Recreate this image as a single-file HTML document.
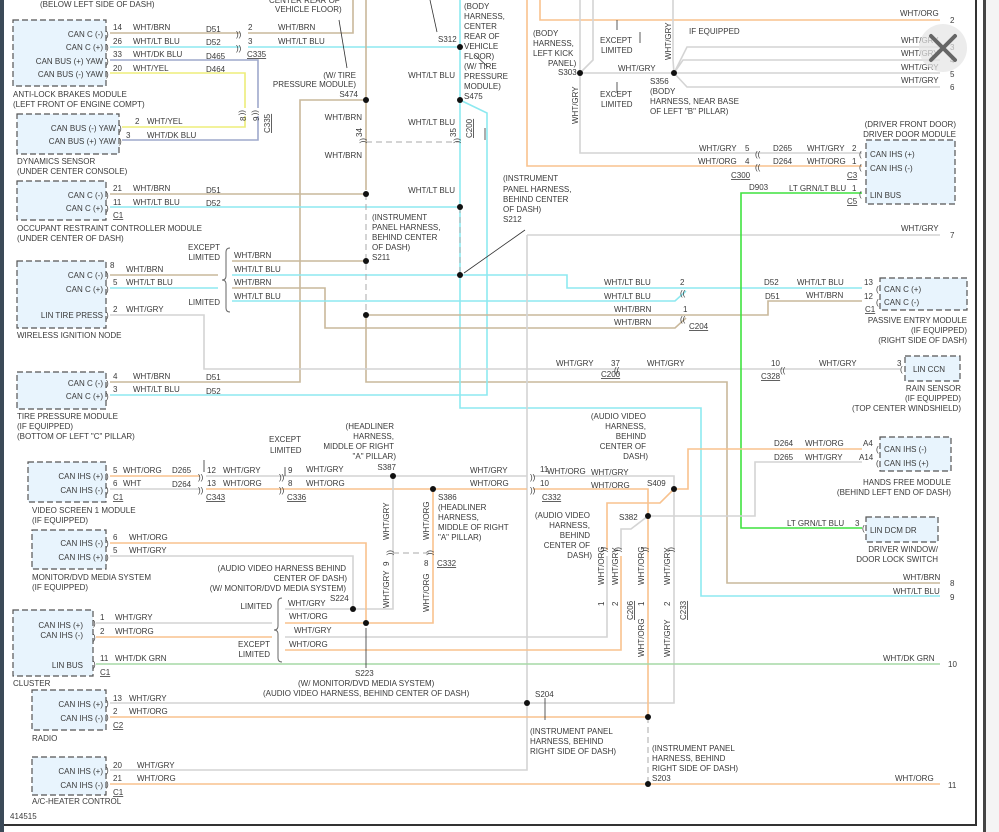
<!DOCTYPE html>
<html><head><meta charset="utf-8"><style>
html,body{margin:0;padding:0;background:#fff;width:999px;height:832px;overflow:hidden}
svg{position:absolute;left:0;top:0}
text{font-family:"Liberation Sans",sans-serif;font-size:8px;fill:#3a3a3a}
.e{text-anchor:end}
.c{font-size:10px;fill:#444}
.w{fill:none;stroke-width:1.6}
.tan{stroke:#c9b89b}.cy{stroke:#8de9f0}.gr{stroke:#d4d4d4}.or{stroke:#f8c28e}.ye{stroke:#eded7a}.db{stroke:#9ea8cc}.gn{stroke:#3fe23f}.dg{stroke:#a6d8a6}
.bx{fill:#e8f4fd;stroke:#555;stroke-width:1.2;stroke-dasharray:6,3}
.ds{fill:none;stroke:#aaa;stroke-width:1;stroke-dasharray:6,4}
.u{text-decoration:underline}
</style></head><body>
<svg width="999" height="832" viewBox="0 0 999 832">
<rect x="0" y="0" width="4" height="832" fill="#3b4a58"/>
<rect x="4" y="824" width="973" height="2" fill="#333"/>
<rect x="975" y="0" width="2" height="826" fill="#333"/>
<rect x="983" y="0" width="3" height="832" fill="#444"/>
<rect x="986" y="0" width="13" height="832" fill="#f4f4f4"/>

<g class="w">
<path class="tan" d="M110 33H240M248 33H353V0"/>
<path class="cy" d="M110 47H240M248 47H460"/>
<path class="db" d="M110 60H258V108M258 116V140H122"/>
<path class="ye" d="M110 73H245V108M245 116V127H122"/>
<path class="tan" d="M366 0V190M366 318V382H727V583H940"/>
<path class="tan" d="M366 100H300V382H110"/>
<path class="cy" d="M460 0V408H701V596H940"/>
<path class="cy" d="M460 100L487 113V395H110"/>
<path class="tan" d="M110 194H366"/>
<path class="cy" d="M110 207H460"/>
<path class="tan" d="M110 275H218"/>
<path class="cy" d="M110 288H218"/>
<path class="gr" d="M110 315H204V369H900"/>
<path class="tan" d="M232 261H366"/>
<path class="cy" d="M232 275H567V288H862"/>
<path class="tan" d="M232 288H325V328H675L686 318"/>
<path class="cy" d="M232 301H675L686 291"/>
<path class="tan" d="M366 315H768V301H862"/>
<path class="gr" d="M527 235H940M527 235V770H110"/>
<path class="or" d="M540 0V20H940"/>
<path class="or" d="M527 0V166H862"/>
<path class="gr" d="M580 0V153H862"/>
<path class="gr" d="M593 0V60L580 73H674M673 0V60L674 73"/>
<path class="gr" d="M674 73L687 47H940M674 73L683 60H940M674 73H940M674 73L687 87H940"/>
<path class="gn" d="M862 193H741V528H862"/>
<path class="or" d="M674 489H688V449H862"/>
<path class="gr" d="M648 516H755V462H862"/>
<path class="or" d="M110 476H200"/>
<path class="gr" d="M110 489H200"/>
<path class="gr" d="M206 476H527M533 476H674V703H110"/>
<path class="or" d="M206 489H527M533 489H648V717H110M648 784H110M648 784H940"/>
<path class="gr" d="M393 476V609H285"/>
<path class="or" d="M433 489V623H285"/>
<path class="gr" d="M353 609V556H110"/>
<path class="or" d="M366 623V543H110"/>
<path class="or" d="M674 489L660 503H607V550"/>
<path class="gr" d="M607 556V637H285"/>
<path class="gr" d="M648 516L631 529H621V550"/>
<path class="or" d="M621 556V650H285"/>
<path class="gr" d="M96 623H272"/>
<path class="or" d="M96 637H272"/>
<path class="dg" d="M96 664H940"/>
</g>
<g class="ds">
<path d="M366 142H460M366 194V318M460 207V275M393 553H433M648 717V784"/>
</g>
<g fill="#111">
<circle cx="460" cy="47" r="3"/><circle cx="366" cy="100" r="3"/><circle cx="460" cy="100" r="3"/>
<circle cx="366" cy="194" r="3"/><circle cx="460" cy="207" r="3"/><circle cx="366" cy="261" r="3"/>
<circle cx="460" cy="275" r="3"/><circle cx="366" cy="315" r="3"/><circle cx="580" cy="73" r="3"/>
<circle cx="674" cy="73" r="3"/><circle cx="393" cy="476" r="3"/><circle cx="433" cy="489" r="3"/>
<circle cx="674" cy="489" r="3"/><circle cx="648" cy="516" r="3"/><circle cx="353" cy="609" r="3"/>
<circle cx="366" cy="623" r="3"/><circle cx="527" cy="703" r="3"/><circle cx="648" cy="717" r="3"/>
<circle cx="648" cy="784" r="3"/>
</g>
<g stroke="#333" stroke-width="0.8" fill="none">
<path d="M339 20L347 68M430 0L437 32M617 20V30M617 93V82M640 32V43M525 230L464 273M204 460V472M285 467V476M366 668V628M545 698V720M485 128V140M475 55L488 67"/>
</g>
<g stroke="#666" stroke-width="1" fill="none">
<path d="M230 248q-4 0-4 4v24q0 4-4 4q4 0 4 4v24q0 4 4 4"/>
<path d="M282 598q-4 0-4 4v24q0 4-4 4q4 0 4 4v24q0 4 4 4"/>
</g>
<rect class="bx" x="13" y="20" width="93" height="66"/>
<rect class="bx" x="17" y="114" width="102" height="40"/>
<rect class="bx" x="17" y="181" width="89" height="39"/>
<rect class="bx" x="17" y="261" width="89" height="67"/>
<rect class="bx" x="17" y="372" width="89" height="37"/>
<rect class="bx" x="28" y="462" width="78" height="40"/>
<rect class="bx" x="32" y="530" width="74" height="39"/>
<rect class="bx" x="13" y="610" width="80" height="66"/>
<rect class="bx" x="32" y="690" width="74" height="40"/>
<rect class="bx" x="32" y="757" width="74" height="38"/>
<rect class="bx" x="866" y="140" width="89" height="64"/>
<rect class="bx" x="880" y="278" width="87" height="32"/>
<rect class="bx" x="905" y="356" width="55" height="25"/>
<rect class="bx" x="880" y="437" width="71" height="34"/>
<rect class="bx" x="866" y="517" width="72" height="25"/>

<g class="c">
<text x="236" y="37">))</text><text x="236" y="51">))</text>
<text x="198" y="480">))</text><text x="198" y="493">))</text>
<text x="279" y="480">))</text><text x="279" y="493">))</text>
<text x="530" y="480">))</text><text x="530" y="493">))</text>
<text x="680" y="296">((</text><text x="680" y="322">((</text>
<text x="614" y="373">((</text><text x="780" y="373">((</text>
<text x="755" y="157">((</text><text x="755" y="170">((</text>
<text x="859" y="157">(</text><text x="859" y="170">(</text><text x="859" y="197">(</text>
<text x="876" y="292">(</text><text x="876" y="305">(</text><text x="900" y="372">(</text>
<text x="876" y="452">(</text><text x="876" y="466">(</text><text x="862" y="531">(</text>
<text x="106" y="37">)</text><text x="106" y="50">)</text><text x="106" y="64">)</text><text x="106" y="77">)</text>
<text x="119" y="131">)</text><text x="119" y="144">)</text>
<text x="106" y="198">)</text><text x="106" y="211">)</text>
<text x="106" y="278">)</text><text x="106" y="292">)</text><text x="106" y="318">)</text>
<text x="106" y="386">)</text><text x="106" y="399">)</text>
<text x="106" y="479">)</text><text x="106" y="493">)</text>
<text x="106" y="546">)</text><text x="106" y="560">)</text>
<text x="93" y="626">)</text><text x="93" y="640">)</text><text x="93" y="667">)</text>
<text x="106" y="706">)</text><text x="106" y="720">)</text>
<text x="106" y="773">)</text><text x="106" y="787">)</text>
<text transform="translate(240,110) rotate(90)">((</text><text transform="translate(253,110) rotate(90)">((</text>
<text transform="translate(361,138) rotate(90)">((</text><text transform="translate(455,138) rotate(90)">((</text>
<text transform="translate(388,550) rotate(90)">((</text><text transform="translate(428,550) rotate(90)">((</text>
<text transform="translate(602,547) rotate(90)">((</text><text transform="translate(616,547) rotate(90)">((</text>
<text transform="translate(643,547) rotate(90)">((</text><text transform="translate(669,547) rotate(90)">((</text>
</g>

<text x="40" y="7">(BELOW LEFT SIDE OF DASH)</text>
<text class="e" x="103" y="37">CAN C (-)</text><text class="e" x="103" y="50">CAN C (+)</text>
<text class="e" x="103" y="64">CAN BUS (+) YAW</text><text class="e" x="103" y="77">CAN BUS (-) YAW</text>
<text x="113" y="30">14</text><text x="133" y="30">WHT/BRN</text><text x="206" y="32">D51</text><text x="248" y="30">2</text><text x="278" y="30">WHT/BRN</text>
<text x="113" y="44">26</text><text x="133" y="44">WHT/LT BLU</text><text x="206" y="45">D52</text><text x="248" y="44">3</text><text x="278" y="44">WHT/LT BLU</text>
<text x="113" y="57">33</text><text x="133" y="57">WHT/DK BLU</text><text x="206" y="59">D465</text><text class="u" x="247" y="57">C335</text>
<text x="113" y="71">20</text><text x="133" y="71">WHT/YEL</text><text x="206" y="72">D464</text>
<text x="13" y="97">ANTI-LOCK BRAKES MODULE</text><text x="13" y="107">(LEFT FRONT OF ENGINE COMPT)</text>
<text x="269" y="3">CENTER REAR OF</text><text x="275" y="12">VEHICLE FLOOR)</text>
<text class="e" x="356" y="78">(W/ TIRE</text><text class="e" x="356" y="87">PRESSURE MODULE)</text><text class="e" x="358" y="97">S474</text>
<text x="438" y="42">S312</text><text x="464" y="9">(BODY</text><text x="464" y="19">HARNESS,</text><text x="464" y="29">CENTER</text><text x="464" y="39">REAR OF</text><text x="464" y="49">VEHICLE</text><text x="464" y="59">FLOOR)</text><text x="464" y="69">(W/ TIRE</text><text x="464" y="79">PRESSURE</text><text x="464" y="89">MODULE)</text><text x="464" y="99">S475</text>
<text class="e" x="455" y="78">WHT/LT BLU</text><text class="e" x="362" y="120">WHT/BRN</text><text class="e" x="455" y="125">WHT/LT BLU</text>
<text class="e" x="362" y="158">WHT/BRN</text><text class="e" x="455" y="193">WHT/LT BLU</text>
<text transform="translate(362,137) rotate(-90)">34</text><text transform="translate(456,137) rotate(-90)">35</text>
<text class="u" transform="translate(472,138) rotate(-90)">C200</text>
<text x="135" y="124">2</text><text x="147" y="124">WHT/YEL</text><text x="126" y="138">3</text><text x="147" y="138">WHT/DK BLU</text>
<text class="e" x="116" y="131">CAN BUS (-) YAW</text><text class="e" x="116" y="144">CAN BUS (+) YAW</text>
<text x="17" y="164">DYNAMICS SENSOR</text><text x="17" y="174">(UNDER CENTER CONSOLE)</text>
<text transform="translate(246,121) rotate(-90)">8</text><text transform="translate(259,121) rotate(-90)">9</text>
<text class="u" transform="translate(270,133) rotate(-90)">C335</text>
<text class="e" x="103" y="198">CAN C (-)</text><text class="e" x="103" y="211">CAN C (+)</text>
<text x="113" y="191">21</text><text x="133" y="191">WHT/BRN</text><text x="206" y="193">D51</text>
<text x="113" y="205">11</text><text x="133" y="205">WHT/LT BLU</text><text x="206" y="206">D52</text><text class="u" x="113" y="218">C1</text>
<text x="17" y="231">OCCUPANT RESTRAINT CONTROLLER MODULE</text><text x="17" y="241">(UNDER CENTER OF DASH)</text>
<text x="372" y="220">(INSTRUMENT</text><text x="372" y="230">PANEL HARNESS,</text><text x="372" y="240">BEHIND CENTER</text><text x="372" y="250">OF DASH)</text><text x="372" y="260">S211</text>
<text x="503" y="181">(INSTRUMENT</text><text x="503" y="192">PANEL HARNESS,</text><text x="503" y="202">BEHIND CENTER</text><text x="503" y="212">OF DASH)</text><text x="503" y="222">S212</text>
<text class="e" x="220" y="250">EXCEPT</text><text class="e" x="220" y="260">LIMITED</text><text class="e" x="220" y="305">LIMITED</text>
<text x="234" y="258">WHT/BRN</text><text x="234" y="272">WHT/LT BLU</text><text x="234" y="285">WHT/BRN</text><text x="234" y="299">WHT/LT BLU</text>
<text class="e" x="103" y="278">CAN C (-)</text><text class="e" x="103" y="292">CAN C (+)</text><text class="e" x="103" y="318">LIN TIRE PRESS</text>
<text x="110" y="268">8</text><text x="126" y="272">WHT/BRN</text><text x="113" y="285">5</text><text x="126" y="285">WHT/LT BLU</text><text x="113" y="312">2</text><text x="126" y="312">WHT/GRY</text>
<text x="17" y="338">WIRELESS IGNITION NODE</text>
<text x="604" y="285">WHT/LT BLU</text><text x="604" y="299">WHT/LT BLU</text><text x="614" y="312">WHT/BRN</text><text x="614" y="325">WHT/BRN</text>
<text x="680" y="285">2</text><text x="683" y="312">1</text><text class="u" x="689" y="329">C204</text>
<text x="764" y="285">D52</text><text x="797" y="285">WHT/LT BLU</text><text x="864" y="285">13</text>
<text x="765" y="299">D51</text><text x="806" y="298">WHT/BRN</text><text x="864" y="299">12</text><text class="u" x="865" y="312">C1</text>
<text x="884" y="292">CAN C (+)</text><text x="884" y="305">CAN C (-)</text>
<text class="e" x="967" y="323">PASSIVE ENTRY MODULE</text><text class="e" x="967" y="333">(IF EQUIPPED)</text><text class="e" x="967" y="343">(RIGHT SIDE OF DASH)</text>
<text x="556" y="366">WHT/GRY</text><text x="611" y="366">37</text><text class="u" x="601" y="377">C200</text><text x="647" y="366">WHT/GRY</text>
<text x="771" y="366">10</text><text class="u" x="761" y="379">C328</text><text x="819" y="366">WHT/GRY</text><text x="897" y="366">3</text>
<text x="913" y="372">LIN CCN</text>
<text class="e" x="961" y="391">RAIN SENSOR</text><text class="e" x="961" y="401">(IF EQUIPPED)</text><text class="e" x="961" y="411">(TOP CENTER WINDSHIELD)</text>
<text class="e" x="103" y="386">CAN C (-)</text><text class="e" x="103" y="399">CAN C (+)</text>
<text x="113" y="379">4</text><text x="133" y="379">WHT/BRN</text><text x="206" y="380">D51</text>
<text x="113" y="392">3</text><text x="133" y="392">WHT/LT BLU</text><text x="206" y="394">D52</text>
<text x="17" y="419">TIRE PRESSURE MODULE</text><text x="17" y="429">(IF EQUIPPED)</text><text x="17" y="439">(BOTTOM OF LEFT "C" PILLAR)</text>
<text x="533" y="36">(BODY</text><text x="533" y="46">HARNESS,</text><text x="533" y="56">LEFT KICK</text><text x="548" y="66">PANEL)</text><text x="558" y="75">S303</text>
<text x="600" y="43">EXCEPT</text><text x="601" y="53">LIMITED</text><text x="600" y="97">EXCEPT</text><text x="601" y="107">LIMITED</text>
<text x="618" y="71">WHT/GRY</text><text x="689" y="34">IF EQUIPPED</text>
<text transform="translate(671,60) rotate(-90)">WHT/GRY</text><text transform="translate(578,124) rotate(-90)">WHT/GRY</text>
<text x="650" y="84">S356</text><text x="650" y="94">(BODY</text><text x="650" y="104">HARNESS, NEAR BASE</text><text x="650" y="114">OF LEFT "B" PILLAR)</text>
<text x="900" y="16">WHT/ORG</text><text x="950" y="23">2</text>
<text x="901" y="43">WHT/GRY</text><text x="901" y="56">WHT/GRY</text><text x="901" y="70">WHT/GRY</text><text x="901" y="83">WHT/GRY</text>
<text x="950" y="50">3</text><text x="950" y="63">4</text><text x="950" y="77">5</text><text x="950" y="90">6</text>
<text class="e" x="956" y="127">(DRIVER FRONT DOOR)</text><text class="e" x="956" y="137">DRIVER DOOR MODULE</text>
<text x="699" y="151">WHT/GRY</text><text x="745" y="151">5</text><text x="773" y="151">D265</text><text x="807" y="151">WHT/GRY</text><text x="852" y="151">2</text>
<text x="698" y="164">WHT/ORG</text><text x="745" y="164">4</text><text x="773" y="164">D264</text><text x="807" y="164">WHT/ORG</text><text x="852" y="164">1</text>
<text class="u" x="731" y="178">C300</text><text class="u" x="847" y="178">C3</text>
<text x="870" y="157">CAN IHS (+)</text><text x="870" y="171">CAN IHS (-)</text><text x="870" y="198">LIN BUS</text>
<text x="749" y="190">D903</text><text x="789" y="191">LT GRN/LT BLU</text><text x="852" y="191">1</text><text class="u" x="847" y="204">C5</text>
<text x="901" y="231">WHT/GRY</text><text x="950" y="238">7</text>
<text x="774" y="446">D264</text><text x="805" y="446">WHT/ORG</text><text x="863" y="446">A4</text>
<text x="774" y="460">D265</text><text x="805" y="460">WHT/GRY</text><text x="859" y="460">A14</text>
<text x="884" y="452">CAN IHS (-)</text><text x="884" y="466">CAN IHS (+)</text>
<text class="e" x="951" y="485">HANDS FREE MODULE</text><text class="e" x="951" y="495">(BEHIND LEFT END OF DASH)</text>
<text x="787" y="526">LT GRN/LT BLU</text><text x="855" y="526">3</text><text x="870" y="533">LIN DCM DR</text>
<text class="e" x="938" y="552">DRIVER WINDOW/</text><text class="e" x="938" y="562">DOOR LOCK SWITCH</text>
<text x="903" y="580">WHT/BRN</text><text x="950" y="586">8</text><text x="893" y="594">WHT/LT BLU</text><text x="950" y="600">9</text>
<text x="883" y="661">WHT/DK GRN</text><text x="948" y="667">10</text><text x="895" y="781">WHT/ORG</text><text x="948" y="788">11</text>
<text class="e" x="646" y="419">(AUDIO VIDEO</text><text class="e" x="646" y="429">HARNESS,</text><text class="e" x="646" y="439">BEHIND</text><text class="e" x="646" y="449">CENTER OF</text><text class="e" x="648" y="459">DASH)</text>
<text x="547" y="474">WHT/ORG</text><text x="591" y="475">WHT/GRY</text><text x="591" y="488">WHT/ORG</text><text x="647" y="486">S409</text>
<text x="540" y="472">11</text><text x="540" y="486">10</text><text class="u" x="542" y="500">C332</text>
<text x="470" y="473">WHT/GRY</text><text x="470" y="486">WHT/ORG</text>
<text class="e" x="590" y="518">(AUDIO VIDEO</text><text class="e" x="590" y="528">HARNESS,</text><text class="e" x="590" y="538">BEHIND</text><text class="e" x="590" y="548">CENTER OF</text><text class="e" x="592" y="558">DASH)</text>
<text x="619" y="520">S382</text>
<text transform="translate(604,585) rotate(-90)">WHT/ORG</text><text transform="translate(618,585) rotate(-90)">WHT/GRY</text>
<text transform="translate(644,585) rotate(-90)">WHT/ORG</text><text transform="translate(670,585) rotate(-90)">WHT/GRY</text>
<text transform="translate(604,606) rotate(-90)">1</text><text transform="translate(618,606) rotate(-90)">2</text>
<text transform="translate(644,606) rotate(-90)">1</text><text transform="translate(670,606) rotate(-90)">2</text>
<text class="u" transform="translate(633,620) rotate(-90)">C206</text><text class="u" transform="translate(686,620) rotate(-90)">C233</text>
<text transform="translate(644,657) rotate(-90)">WHT/ORG</text><text transform="translate(670,657) rotate(-90)">WHT/GRY</text>
<text class="e" x="103" y="479">CAN IHS (+)</text><text class="e" x="103" y="493">CAN IHS (-)</text>
<text x="113" y="473">5</text><text x="123" y="473">WHT/ORG</text><text x="172" y="473">D265</text><text x="207" y="473">12</text><text x="223" y="473">WHT/GRY</text>
<text x="113" y="486">6</text><text x="123" y="486">WHT</text><text x="172" y="487">D264</text><text x="207" y="486">13</text><text x="223" y="486">WHT/ORG</text>
<text class="u" x="113" y="500">C1</text><text class="u" x="206" y="500">C343</text><text class="u" x="287" y="500">C336</text>
<text x="269" y="442">EXCEPT</text><text x="270" y="453">LIMITED</text>
<text x="288" y="473">9</text><text x="306" y="472">WHT/GRY</text><text x="288" y="486">8</text><text x="306" y="486">WHT/ORG</text>
<text class="e" x="394" y="429">(HEADLINER</text><text class="e" x="394" y="439">HARNESS,</text><text class="e" x="394" y="449">MIDDLE OF RIGHT</text><text class="e" x="396" y="459">"A" PILLAR)</text><text class="e" x="396" y="470">S387</text>
<text x="438" y="500">S386</text><text x="438" y="510">(HEADLINER</text><text x="438" y="520">HARNESS,</text><text x="438" y="530">MIDDLE OF RIGHT</text><text x="438" y="540">"A" PILLAR)</text>
<text transform="translate(389,540) rotate(-90)">WHT/GRY</text><text transform="translate(429,540) rotate(-90)">WHT/ORG</text>
<text transform="translate(389,608) rotate(-90)">WHT/GRY</text><text transform="translate(429,612) rotate(-90)">WHT/ORG</text>
<text transform="translate(389,566) rotate(-90)">9</text><text x="424" y="566">8</text><text class="u" x="437" y="566">C332</text>
<text x="32" y="513">VIDEO SCREEN 1 MODULE</text><text x="32" y="523">(IF EQUIPPED)</text>
<text class="e" x="103" y="546">CAN IHS (-)</text><text class="e" x="103" y="560">CAN IHS (+)</text>
<text x="113" y="540">6</text><text x="129" y="540">WHT/ORG</text><text x="113" y="553">5</text><text x="129" y="553">WHT/GRY</text>
<text x="32" y="580">MONITOR/DVD MEDIA SYSTEM</text><text x="32" y="590">(IF EQUIPPED)</text>
<text class="e" x="346" y="571">(AUDIO VIDEO HARNESS BEHIND</text><text class="e" x="347" y="581">CENTER OF DASH)</text><text class="e" x="346" y="591">(W/ MONITOR/DVD MEDIA SYSTEM)</text>
<text x="330" y="601">S224</text>
<text class="e" x="272" y="609">LIMITED</text><text class="e" x="270" y="647">EXCEPT</text><text class="e" x="270" y="657">LIMITED</text>
<text x="288" y="606">WHT/GRY</text><text x="289" y="619">WHT/ORG</text><text x="294" y="633">WHT/GRY</text><text x="289" y="647">WHT/ORG</text>
<text class="e" x="83" y="628">CAN IHS (+)</text><text class="e" x="83" y="638">CAN IHS (-)</text><text class="e" x="83" y="668">LIN BUS</text>
<text x="100" y="620">1</text><text x="115" y="620">WHT/GRY</text><text x="100" y="634">2</text><text x="115" y="634">WHT/ORG</text>
<text x="100" y="661">11</text><text x="115" y="661">WHT/DK GRN</text><text class="u" x="100" y="675">C1</text>
<text x="13" y="686">CLUSTER</text>
<text x="355" y="676">S223</text><text x="298" y="686">(W/ MONITOR/DVD MEDIA SYSTEM)</text><text x="263" y="696">(AUDIO VIDEO HARNESS, BEHIND CENTER OF DASH)</text>
<text class="e" x="103" y="707">CAN IHS (+)</text><text class="e" x="103" y="721">CAN IHS (-)</text>
<text x="113" y="701">13</text><text x="129" y="701">WHT/GRY</text><text x="113" y="714">2</text><text x="129" y="714">WHT/ORG</text><text class="u" x="113" y="728">C2</text>
<text x="32" y="741">RADIO</text>
<text x="535" y="697">S204</text>
<text x="530" y="734">(INSTRUMENT PANEL</text><text x="530" y="744">HARNESS, BEHIND</text><text x="530" y="754">RIGHT SIDE OF DASH)</text>
<text x="652" y="751">(INSTRUMENT PANEL</text><text x="652" y="761">HARNESS, BEHIND</text><text x="652" y="771">RIGHT SIDE OF DASH)</text><text x="652" y="781">S203</text>
<text class="e" x="103" y="774">CAN IHS (+)</text><text class="e" x="103" y="788">CAN IHS (-)</text>
<text x="113" y="768">20</text><text x="137" y="768">WHT/GRY</text><text x="113" y="781">21</text><text x="137" y="781">WHT/ORG</text><text class="u" x="113" y="795">C1</text>
<text x="32" y="804">A/C-HEATER CONTROL</text>
<text x="10" y="819">414515</text>
<circle cx="943" cy="48" r="24" fill="#e4e4e4" opacity="0.7"/>
<path d="M931 36L955 60M955 36L931 60" stroke="#666" stroke-width="4" stroke-linecap="round"/>
</svg>
</body></html>
